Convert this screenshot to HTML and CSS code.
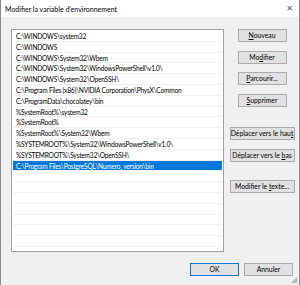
FILE: index.html
```html
<!DOCTYPE html>
<html lang="fr">
<head>
    <meta charset="UTF-8">
    <title>Modifier la variable d'environnement</title>
    <link rel="stylesheet" href="styles.css">
</head>
<body>
    <div class="window">
        <div class="titlebar">
            <span class="title">Modifier la variable d'environnement</span>
            <span class="close">&#x2715;</span>
        </div>

        <div class="content">
            <ul class="list">
                <li>C:\WINDOWS\system32</li>
                <li>C:\WINDOWS</li>
                <li>C:\WINDOWS\System32\Wbem</li>
                <li>C:\WINDOWS\System32\WindowsPowerShell\v1.0\</li>
                <li>C:\WINDOWS\System32\OpenSSH\</li>
                <li>C:\Program Files (x86)\NVIDIA Corporation\PhysX\Common</li>
                <li>C:\ProgramData\chocolatey\bin</li>
                <li>%SystemRoot%\system32</li>
                <li>%SystemRoot%</li>
                <li>%SystemRoot%\System32\Wbem</li>
                <li>%SYSTEMROOT%\System32\WindowsPowerShell\v1.0\</li>
                <li>%SYSTEMROOT%\System32\OpenSSH\</li>
                <li class="selected">C:\Program Files\PostgreSQL\Numero_version\bin</li>
                <li></li>
                <li></li>
                <li></li>
                <li></li>
                <li></li>
                <li></li>
                <li></li>
                <li></li>
            </ul>

            <div class="actions">
                <button class="btn"><u>N</u>ouveau</button>
                <button class="btn">Mo<u>d</u>ifier</button>
                <button class="btn"><u>P</u>arcourir...</button>
                <button class="btn"><u>S</u>upprimer</button>
                <button class="btn wide move-up">Déplacer vers le hau<u>t</u></button>
                <button class="btn wide">Déplacer vers le <u>b</u>as</button>
                <button class="btn wide edit">Modifier le <u>t</u>exte...</button>
            </div>
        </div>

        <div class="footer">
            <button class="btn default">OK</button>
            <button class="btn">Annuler</button>
        </div>
        <span class="grip"></span>
    </div>
</body>
</html>
```

FILE: styles.css
```css
/* Base */
body {
    margin: 0;
    font-family: Lato, "Noto Sans", sans-serif;
    font-size: 6.8px;
    color: #000;
    background: #f0f0f0;
}

.window {
    position: relative;
    width: 298px;
    height: 285px;
    border-left: 1px solid #8a8a8a;
    border-right: 1px solid #8a8a8a;
    background: #f0f0f0;
}

/* Barre de titre */
.titlebar {
    height: 17px;
    background: #fff;
    display: flex;
    align-items: center;
    justify-content: space-between;
    padding: 0 5px 0 4px;
}

.title {
    font-size: 7px;
}

.close {
    font-family: "DejaVu Sans", sans-serif;
    font-size: 8px;
    color: #555;
    margin-right: 1px;
}

/* Contenu */
.content {
    display: flex;
    padding: 12px 0 0 10px;
}

.list {
    list-style: none;
    margin: 0;
    padding: 1px;
    width: 209px;
    height: 219px;
    overflow: hidden;
    background: #fff;
    border: 1px solid #a0a0a0;
    font-size: 6.6px;
    letter-spacing: -0.2px;
}

.list li {
    height: 10.8px;
    line-height: 10px;
    padding-left: 3px;
    border-bottom: 1px solid #f0f0f0;
    box-sizing: border-box;
    white-space: nowrap;
}

.list li.selected {
    background: #0078d7;
    color: #fff;
}

/* Boutons */
.actions {
    width: 66px;
    margin-left: 5px;
    display: flex;
    flex-direction: column;
    align-items: center;
    gap: 8.5px;
}

.btn {
    font-family: inherit;
    font-size: 6.8px;
    width: 49px;
    height: 13px;
    padding: 0;
    background: #e1e1e1;
    border: 1px solid #adadad;
    color: #000;
    line-height: 11px;
    white-space: nowrap;
}

.btn.wide {
    width: 65px;
}

.move-up {
    margin-top: 12px;
}

.edit {
    margin-top: 10px;
}

.footer {
    display: flex;
    justify-content: flex-end;
    gap: 5px;
    padding: 11px 6px 0 0;
}

.btn.default {
    border-color: #0078d7;
}

.grip {
    position: absolute;
    right: 2px;
    bottom: 2px;
    width: 6px;
    height: 6px;
    background: radial-gradient(circle, #999 0.6px, transparent 0.9px) 0 0 / 2px 2px;
    clip-path: polygon(100% 0, 100% 100%, 0 100%);
}
```
